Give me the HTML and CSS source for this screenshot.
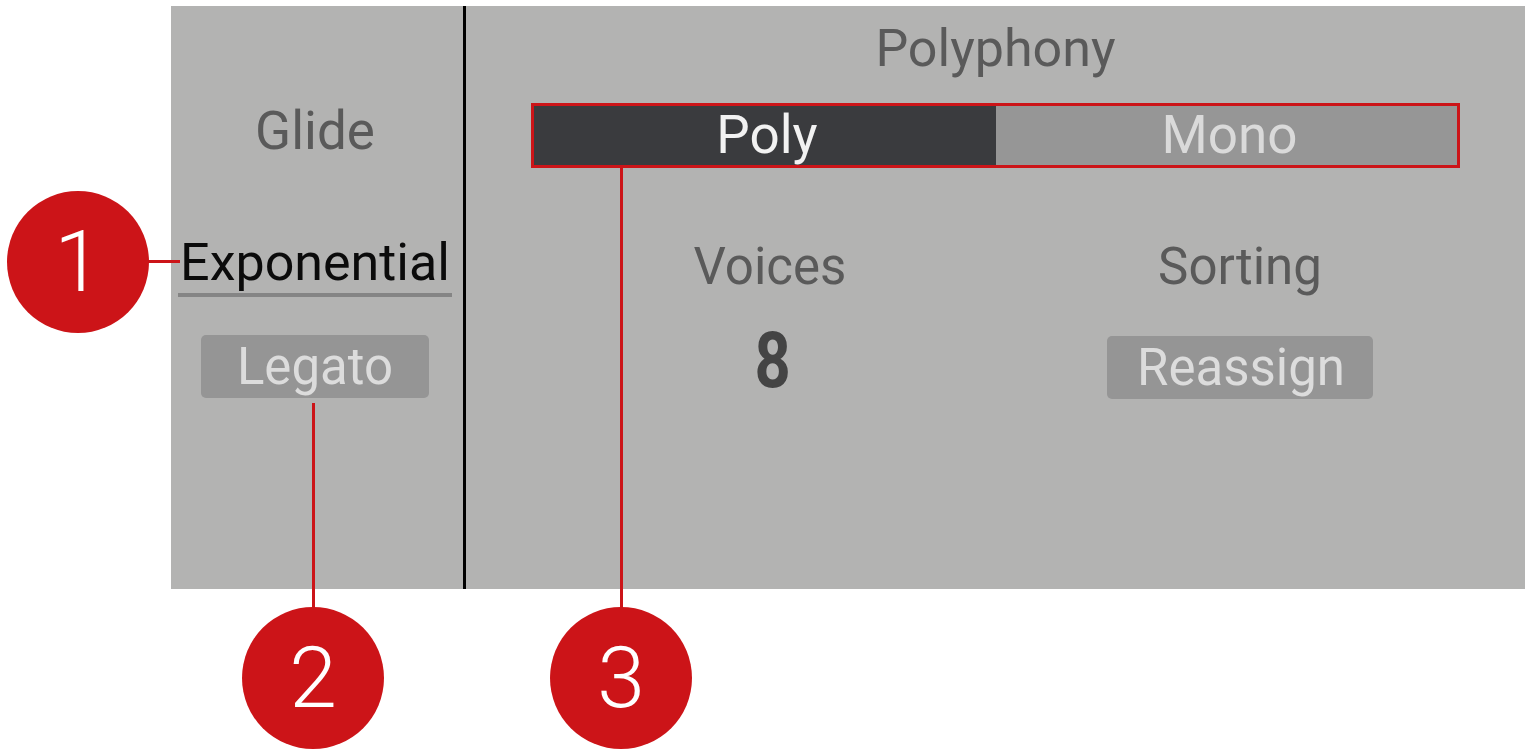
FILE: index.html
```html
<!DOCTYPE html>
<html>
<head>
<meta charset="utf-8">
<link rel="stylesheet" href="styles.css">
</head>
<body>
<div class="page">
  <div class="panel">
    <div class="glide-col">
      <div class="label glide">Glide</div>
      <div class="exp">Exponential</div>
      <div class="btn legato">Legato</div>
    </div>
    <div class="divider"></div>
    <div class="poly-col">
      <div class="label heading">Polyphony</div>
      <div class="switch">
        <div class="seg seg-on">Poly</div>
        <div class="seg seg-off">Mono</div>
      </div>
      <div class="params">
        <div class="param">
          <div class="label plabel">Voices</div>
          <div class="value">8</div>
        </div>
        <div class="param">
          <div class="label plabel">Sorting</div>
          <div class="btn reassign">Reassign</div>
        </div>
      </div>
    </div>
  </div>

  <div class="lead lead-1"></div>
  <div class="lead lead-2"></div>
  <div class="lead lead-3"></div>
  <div class="marker marker-1">1</div>
  <div class="marker marker-2">2</div>
  <div class="marker marker-3">3</div>
</div>
</body>
</html>
```

FILE: styles.css
```css
html, body {
  margin: 0;
  padding: 0;
  background: #ffffff;
}

.page {
  position: relative;
  width: 1532px;
  height: 752px;
  overflow: hidden;
  font-family: Roboto, "Liberation Sans", sans-serif;
}

.panel {
  margin: 6px 0 0 171px;
  width: 1354px;
  height: 583px;
  background: #b3b3b2;
  display: grid;
  grid-template-columns: 292px 3px 1fr;
}

.divider {
  background: #000000;
}

.label {
  color: #5a5a5a;
  white-space: nowrap;
}

/* left column */
.glide-col {
  display: flex;
  flex-direction: column;
  align-items: center;
  padding-top: 99px;
  padding-right: 4px;
}

.glide {
  font-size: 53px;
  line-height: 53px;
}

.exp {
  margin-top: 78px;
  font-size: 52px;
  line-height: 54px;
  color: #0b0b0b;
  padding: 0 2px 3px;
  border-bottom: 4px solid #858585;
}

.btn {
  background: #959595;
  color: #dcdcdc;
  border-radius: 5px;
  height: 63px;
  line-height: 63px;
  font-size: 51px;
  white-space: nowrap;
}

.legato {
  margin-top: 38px;
  padding: 0 36px;
}

/* right column */
.poly-col {
  display: flex;
  flex-direction: column;
  align-items: center;
  padding-top: 17px;
}

.heading {
  font-size: 52px;
  line-height: 52px;
}

.switch {
  margin-top: 28px;
  width: 923px;
  height: 59px;
  border: 3px solid #cc1418;
  display: grid;
  grid-template-columns: 462px 1fr;
}

.seg {
  text-align: center;
  font-size: 53px;
  line-height: 59px;
}

.seg-on {
  background: #3a3b3e;
  color: #f2f2f2;
  padding-left: 4px;
}

.seg-off {
  background: #969696;
  color: #dadada;
  padding-left: 6px;
}

.params {
  align-self: stretch;
  margin-top: 73px;
  padding: 0 50px 0 69px;
  display: grid;
  grid-template-columns: 1fr 1fr;
}

.param {
  display: flex;
  flex-direction: column;
  align-items: center;
}

.plabel {
  font-size: 51px;
  line-height: 51px;
}

.value {
  margin-top: 31px;
  font-size: 77px;
  line-height: 77px;
  font-weight: 700;
  color: #444444;
  transform: scaleX(0.82);
  padding-left: 6px;
}

.reassign {
  margin-top: 44px;
  padding: 0 28px 0 30px;
}

/* annotation callouts */
.lead {
  position: absolute;
  background: #cc1418;
}

.lead-1 {
  left: 146px;
  top: 260px;
  width: 34px;
  height: 3px;
}

.lead-2 {
  left: 312px;
  top: 403px;
  width: 3px;
  height: 206px;
}

.lead-3 {
  left: 620px;
  top: 166px;
  width: 3px;
  height: 443px;
}

.marker {
  position: absolute;
  width: 142px;
  height: 142px;
  border-radius: 50%;
  background: #cc1418;
  color: #ffffff;
  font-family: Roboto, "Liberation Sans", sans-serif;
  font-weight: 300;
  font-size: 86px;
  line-height: 142px;
  text-align: center;
}

.marker-1 {
  left: 7px;
  top: 191px;
}

.marker-2 {
  left: 242px;
  top: 607px;
}

.marker-3 {
  left: 550px;
  top: 607px;
}
```
